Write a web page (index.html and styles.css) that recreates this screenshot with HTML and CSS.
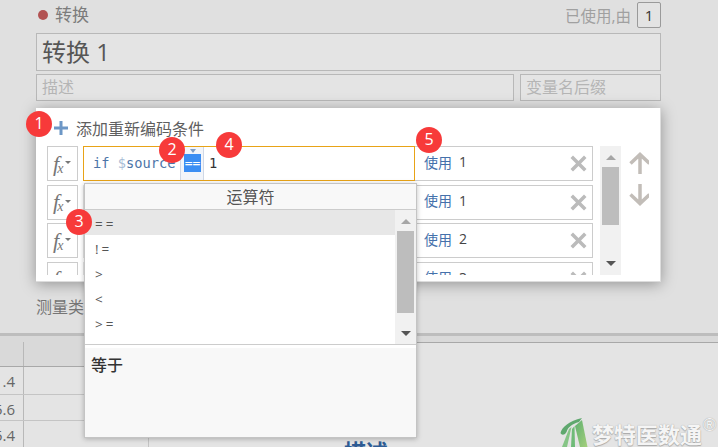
FILE: index.html
```html
<!DOCTYPE html>
<html lang="zh">
<head>
<meta charset="utf-8">
<title>转换</title>
<link rel="stylesheet" href="styles.css">
</head>
<body>
<div class="page">
  <section class="form">
    <div class="topbar">
      <span class="dot"></span>
      <span class="title">转换</span>
      <span class="used">已使用,由</span>
      <span class="count">1</span>
    </div>
    <div class="field name">转换 1</div>
    <div class="subfields">
      <div class="field sub desc">描述</div>
      <div class="field sub suffix">变量名后缀</div>
    </div>
    <div class="measure">测量类</div>
  </section>

  <section class="lower">
    <div class="data">
      <div class="data-band"></div>
      <div class="data-head"><span class="c1"></span><span class="c2"></span></div>
      <div class="data-row"><span class="c1">1.4</span><span class="c2"></span></div>
      <div class="data-row"><span class="c1">5.6</span><span class="c2"></span></div>
      <div class="data-row"><span class="c1">5.4</span><span class="c2"></span></div>
      <div class="mini-bars"><span class="mini-a"></span><span class="mini-b"></span></div>
    </div>
    <div class="side">
      <div class="side-band"></div>
      <div class="side-title">描述</div>
    </div>
  </section>

  <div class="brand">
    <svg class="brand-icon" width="28" height="29" viewBox="0 0 28 29">
      <defs>
        <linearGradient id="lg" x1="0" y1="0" x2="1" y2="1">
          <stop offset="0" stop-color="#5fb070"/>
          <stop offset="1" stop-color="#a5cf7c"/>
        </linearGradient>
      </defs>
      <path fill="#5fa86e" d="M0.500 15C2 9 9 3 22 0L19 4C12 6 8 9 6.500 14L5 16C3 17 1.500 17 0.500 15Z"/>
      <path fill="#86c586" d="M2 29L9 11L11.500 9L7 29Z"/>
      <path fill="#6fbb78" d="M11 29L12 11L14.500 8L15 29Z"/>
      <path fill="url(#lg)" d="M15 8L22 2L27.500 29L20 29Z"/>
    </svg>
    <span class="brand-name">梦特医数通</span>
    <span class="brand-reg">®</span>
  </div>

  <div class="dialog">
    <div class="add"><svg class="plus" width="14" height="14" viewBox="0 0 14 14"><path d="M5.500 0H8.500V5.500H14V8.500H8.500V14H5.500V8.500H0V5.500H5.500Z"/></svg><span>添加重新编码条件</span></div>
    <div class="rules">
      <div class="rule-list">
        <div class="rule">
          <span class="fx"><i>f<sub>x</sub></i><b class="caret"></b></span>
          <div class="cond active">
            <span class="code">if <em>$</em>source</span>
            <span class="op"><b class="op-caret"></b><span class="op-val">==</span></span>
            <span class="val">1</span>
          </div>
          <div class="use"><span class="use-label">使用</span><span class="use-val">1</span><svg class="del" width="17" height="17" viewBox="0 0 17 17"><path d="M3 0.500L8.500 6 14 0.500 16.500 3 11 8.500 16.500 14 14 16.500 8.500 11 3 16.500 0.500 14 6 8.500 0.500 3Z"/></svg></div>
        </div>
        <div class="rule">
          <span class="fx"><i>f<sub>x</sub></i><b class="caret"></b></span>
          <div class="cond"></div>
          <div class="use"><span class="use-label">使用</span><span class="use-val">1</span><svg class="del" width="17" height="17" viewBox="0 0 17 17"><path d="M3 0.500L8.500 6 14 0.500 16.500 3 11 8.500 16.500 14 14 16.500 8.500 11 3 16.500 0.500 14 6 8.500 0.500 3Z"/></svg></div>
        </div>
        <div class="rule">
          <span class="fx"><i>f<sub>x</sub></i><b class="caret"></b></span>
          <div class="cond"></div>
          <div class="use"><span class="use-label">使用</span><span class="use-val">2</span><svg class="del" width="17" height="17" viewBox="0 0 17 17"><path d="M3 0.500L8.500 6 14 0.500 16.500 3 11 8.500 16.500 14 14 16.500 8.500 11 3 16.500 0.500 14 6 8.500 0.500 3Z"/></svg></div>
        </div>
        <div class="rule">
          <span class="fx"><i>f<sub>x</sub></i><b class="caret"></b></span>
          <div class="cond"></div>
          <div class="use"><span class="use-label">使用</span><span class="use-val">3</span><svg class="del" width="17" height="17" viewBox="0 0 17 17"><path d="M3 0.500L8.500 6 14 0.500 16.500 3 11 8.500 16.500 14 14 16.500 8.500 11 3 16.500 0.500 14 6 8.500 0.500 3Z"/></svg></div>
        </div>
      </div>
      <div class="vscroll rules-scroll">
        <b class="tri up"></b>
        <span class="thumb"></span>
        <b class="tri down"></b>
      </div>
      <div class="moves">
        <svg width="22" height="23" viewBox="0 0 22 23"><path d="M11 22V2.500M1.500 11.500L11 2.500 20.500 11.500"/></svg>
        <svg width="22" height="23" viewBox="0 0 22 23"><path d="M11 1V20.500M1.500 11.500L11 20.500 20.500 11.500"/></svg>
      </div>
    </div>
  </div>

  <div class="popup">
    <div class="popup-head">运算符</div>
    <div class="popup-body">
      <ul class="ops">
        <li class="on">==</li>
        <li>!=</li>
        <li>&gt;</li>
        <li>&lt;</li>
        <li>&gt;=</li>
      </ul>
      <div class="vscroll ops-scroll">
        <b class="tri up"></b>
        <span class="thumb"></span>
        <b class="tri down"></b>
      </div>
    </div>
    <div class="popup-foot">等于</div>
  </div>

  <span class="badge b1">1</span>
  <span class="badge b2">2</span>
  <span class="badge b3">3</span>
  <span class="badge b4">4</span>
  <span class="badge b5">5</span>
</div>
</body>
</html>
```
FILE: styles.css
```css
* { box-sizing: border-box; }
html, body { margin: 0; padding: 0; }
body {
  width: 718px;
  height: 447px;
  overflow: hidden;
  background: #e0e0e0;
  font-family: "Open Sans", "Noto Sans CJK SC", sans-serif;
}
.page {
  position: relative;
  width: 718px;
  height: 447px;
  overflow: hidden;
  display: flex;
  flex-direction: column;
}

/* dimmed form */
.form {
  height: 333px;
  flex: none;
  padding: 2px 57px 0 36px;
  background: #e0e0e0;
}
.topbar {
  height: 26px;
  display: flex;
  align-items: center;
}
.dot {
  width: 10px;
  height: 10px;
  margin: 0 7px 0 2px;
  border-radius: 50%;
  background: #b25252;
}
.title { font-size: 17px; line-height: 26px; color: #7c7c7c; }
.used { margin-left: auto; font-size: 15.500px; color: #a0a0a0; }
.count {
  width: 24px;
  height: 26px;
  margin-left: 6px;
  border: 1px solid #9a9a9a;
  border-radius: 2px;
  background: #e3e3e3;
  font-size: 15px;
  line-height: 24px;
  text-align: center;
  color: #333;
}
.field {
  border: 1px solid #b8b8b8;
  background: #e4e4e4;
}
.name {
  height: 38px;
  margin-top: 5px;
  padding-left: 5px;
  font-size: 24px;
  line-height: 35px;
  color: #565656;
}
.subfields {
  display: flex;
  gap: 6px;
  margin-top: 3px;
}
.sub {
  height: 27px;
  padding-left: 5px;
  font-size: 16px;
  line-height: 25px;
  color: #b5b5b5;
}
.desc { width: 478px; }
.suffix { width: 141px; }
.measure {
  margin-top: 194px;
  font-size: 16px;
  line-height: 24px;
  color: #757575;
}

/* dimmed lower panels */
.lower {
  flex: 1;
  display: flex;
  border-top: 3px solid #bdbdbd;
  background: #e4e4e4;
}
.data {
  position: relative;
  width: 316px;
  flex: none;
}
.data-band { height: 6px; background: #d9d9d9; }
.data-head {
  height: 25px;
  display: flex;
  background: #d9d9d9;
  border-bottom: 1px solid #a8a8a8;
}
.data-row {
  height: 27px;
  display: flex;
  font-size: 15px;
  line-height: 28px;
  color: #666;
  border-bottom: 1px solid #c4c4c4;
}
.data-row:nth-child(3) { height: 28px; }
.data-row:nth-child(4) { height: 26px; }
.c1 {
  width: 24px;
  flex: none;
  display: flex;
  justify-content: flex-end;
  padding-right: 8px;
  white-space: nowrap;
  border-right: 1px solid #b8b8b8;
}
.c2 {
  width: 125px;
  flex: none;
  border-right: 1px solid #c4c4c4;
}
.mini-bars {
  position: absolute;
  left: 273px;
  bottom: 0;
  width: 43px;
  height: 10px;
  display: flex;
  border-left: 1px solid #c0c0c0;
  border-right: 1px solid #c0c0c0;
}
.mini-a { width: 18px; margin-left: 4px; background: #b4b4b4; }
.mini-b { width: 19px; margin-left: 1px; background: #cfcfcf; }
.side { flex: 1; }
.side-band {
  height: 7px;
  background: #d9d9d9;
  border-bottom: 1px solid #a8a8a8;
}
.side-title {
  margin: 96px 0 0 28px;
  font-size: 22px;
  font-weight: 700;
  line-height: 24px;
  color: #2f5c94;
}

/* watermark */
.brand {
  position: absolute;
  left: 560px;
  top: 418px;
  width: 158px;
  height: 29px;
}
.brand-icon { position: absolute; left: 0; top: 0; }
.brand-name {
  position: absolute;
  left: 32px;
  top: 3px;
  font-size: 22px;
  font-weight: 700;
  line-height: 26px;
  color: #f5f5f5;
  text-shadow: 0 0 1px #9c9c9c, 0 1px 1px #aaa;
  white-space: nowrap;
}
.brand-reg {
  position: absolute;
  left: 143px;
  top: -3px;
  font-family: "Liberation Sans", sans-serif;
  font-size: 18px;
  line-height: 20px;
  color: #f5f5f5;
  text-shadow: 0 0 1px #888;
}

/* recode dialog */
.dialog {
  position: absolute;
  left: 36px;
  top: 108px;
  width: 625px;
  height: 174px;
  padding: 5px 11px 0;
  background: #fff;
  border-right: 1px solid #ddd;
  border-bottom: 1px solid #ddd;
  box-shadow: 0 2px 14px rgba(0, 0, 0, 0.35);
}
.add {
  height: 29px;
  margin-bottom: 4px;
  display: flex;
  align-items: center;
  gap: 8px;
  padding-left: 7px;
  font-size: 16px;
  color: #5f5f5f;
}
.plus { fill: #6d97c6; }
.rules {
  height: 129px;
  display: flex;
  overflow: hidden;
}
.rule-list { width: 546px; flex: none; }
.rule {
  height: 35px;
  margin-bottom: 3.500px;
  display: flex;
}
.fx {
  width: 31px;
  height: 100%;
  flex: none;
  display: flex;
  align-items: center;
  padding-left: 5px;
  border: 1px solid #ccc;
  font-family: "Liberation Serif", serif;
  font-size: 22px;
  color: #777;
}
.fx i { line-height: 1; font-weight: 400; white-space: nowrap; }
.fx sub { margin-left: -2px; font-size: 14px; line-height: 0; vertical-align: -2px; }
.caret {
  margin: 0 0 2px 2px;
  border-top: 3px solid #777;
  border-left: 3px solid transparent;
  border-right: 3px solid transparent;
}
.cond {
  width: 332px;
  height: 100%;
  flex: none;
  margin-left: 5px;
  display: flex;
  align-items: stretch;
  padding-left: 9px;
  border: 1px solid #e5e5e5;
  font-family: "DejaVu Sans Mono", monospace;
  font-size: 13.700px;
  line-height: 32px;
  color: #4d75a8;
}
.cond.active { border-color: #e8a317; }
.code { width: 87px; flex: none; white-space: nowrap; }
.code em { font-style: normal; color: #a9bdd6; }
.op {
  position: relative;
  width: 24px;
  flex: none;
  background: #f2f5fa;
  border-left: 1px solid #cfd8e6;
  border-right: 1px solid #cfd8e6;
}
.op-caret {
  position: absolute;
  left: 9px;
  top: 2px;
  border-top: 4px solid #7f9ec6;
  border-left: 3px solid transparent;
  border-right: 3px solid transparent;
}
.op-val {
  position: absolute;
  left: 3px;
  top: 7px;
  width: 17px;
  height: 18px;
  background: #3b8ef3;
  color: #fff;
  font-size: 13px;
  line-height: 18px;
  text-align: center;
  font-variant-ligatures: none;
}
.val {
  padding-left: 5px;
  font-family: "DejaVu Sans Mono", monospace;
  color: #333;
}
.use {
  width: 178px;
  height: 100%;
  flex: none;
  display: flex;
  align-items: center;
  padding: 0 5px 0 9px;
  border: 1px solid #ccc;
  border-left: 0;
  font-size: 14px;
}
.use-label { margin-bottom: 4px; color: #4571ab; }
.use-val { margin: 0 0 4px 7px; color: #444; }
.del { margin-left: auto; fill: #bbb; }
.vscroll {
  position: relative;
  flex: none;
  background: #f1f1f1;
}
.thumb {
  position: absolute;
  background: #bdbdbd;
}
.tri {
  position: absolute;
  left: 50%;
  margin-left: -5px;
  border-left: 5px solid transparent;
  border-right: 5px solid transparent;
}
.tri.up { border-bottom: 5px solid #a6a6a6; }
.tri.down { border-top: 5px solid #555; }
.rules-scroll {
  width: 21px;
  height: 129px;
  margin-left: 7px;
}
.rules-scroll .thumb { left: 2px; right: 2px; top: 21px; height: 58px; }
.rules-scroll .up { top: 9px; }
.rules-scroll .down { bottom: 9px; }
.moves {
  margin-left: 8px;
  padding-top: 6px;
  display: flex;
  flex-direction: column;
  gap: 8px;
}
.moves svg {
  fill: none;
  stroke: #c2bdb8;
  stroke-width: 3.500;
}

/* operator popup */
.popup {
  position: absolute;
  left: 84px;
  top: 183px;
  width: 333px;
  height: 255px;
  display: flex;
  flex-direction: column;
  background: #fff;
  border: 1px solid #c4c4c4;
  box-shadow: 0 1px 5px rgba(0, 0, 0, 0.25);
}
.popup-head {
  height: 26px;
  flex: none;
  background: #f8f8f8;
  border-bottom: 1px solid #ccc;
  font-size: 16px;
  line-height: 27px;
  text-align: center;
  color: #555;
}
.popup-body {
  height: 135px;
  flex: none;
  display: flex;
  border-bottom: 1px solid #ccc;
}
.ops {
  flex: 1;
  margin: 0;
  padding: 0;
  list-style: none;
}
.ops li {
  height: 25px;
  padding-left: 10px;
  font-size: 13.500px;
  line-height: 28px;
  letter-spacing: 3px;
  color: #555;
}
.ops li.on { background: #e7e7e7; }
.ops-scroll {
  width: 21px;
  height: 134px;
}
.ops-scroll .thumb { left: 2px; right: 2px; top: 21px; height: 82px; }
.ops-scroll .up { top: 9px; }
.ops-scroll .down { bottom: 8px; }
.popup-foot {
  flex: 1;
  margin-top: 3px;
  padding: 5px 0 0 6px;
  background: #f8f8f8;
  font-size: 16px;
  font-weight: 500;
  line-height: 24px;
  color: #333;
}

/* step markers */
.badge {
  position: absolute;
  width: 26px;
  height: 26px;
  border-radius: 50%;
  background: #f73a3a;
  color: #fff;
  font-size: 16px;
  line-height: 24px;
  text-align: center;
}
.b1 { left: 26px; top: 111px; }
.b2 { left: 159px; top: 137px; }
.b3 { left: 66px; top: 209px; }
.b4 { left: 216px; top: 132px; }
.b5 { left: 416px; top: 127px; }
```
